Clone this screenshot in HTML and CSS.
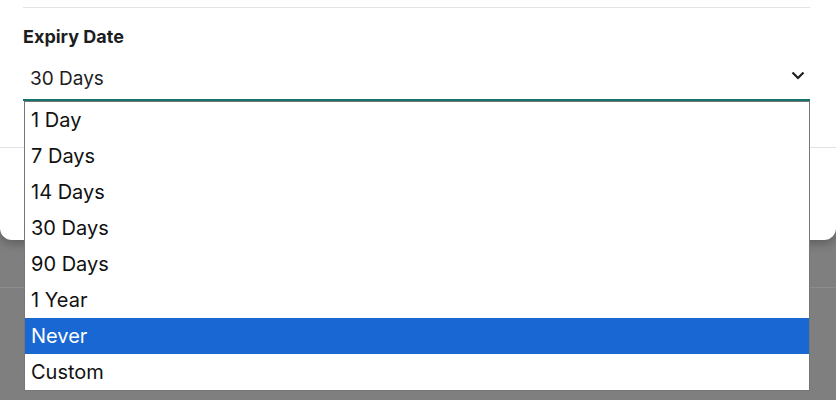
FILE: index.html
```html
<!DOCTYPE html>
<html>
<head>
<meta charset="utf-8">
<link rel="stylesheet" href="styles.css">
</head>
<body>
<div class="page">
  <div class="modal">
    <div class="modal-body">
      <div class="divider"></div>
      <div class="field">
        <div class="label">Expiry Date</div>
        <div class="select">
          <span class="value">30 Days</span>
          <svg class="chev" width="14" height="9" viewBox="0 0 14 9"><path d="M1.5 1.5 L7 7 L12.5 1.5" fill="none" stroke="#1f1f1f" stroke-width="2.2"/></svg>
        </div>
      </div>
    </div>
    <div class="modal-footer"></div>
  </div>
  <div class="backdrop-line"></div>
  <ul class="options">
    <li>1 Day</li>
    <li>7 Days</li>
    <li>14 Days</li>
    <li>30 Days</li>
    <li>90 Days</li>
    <li>1 Year</li>
    <li class="selected">Never</li>
    <li>Custom</li>
  </ul>
</div>
</body>
</html>
```
FILE: styles.css
```css
html, body {
  margin: 0;
  padding: 0;
}
body {
  width: 836px;
  height: 400px;
  overflow: hidden;
  background: #7f7f7f;
  font-family: Inter, "Noto Sans", sans-serif;
  color: #1c1d1f;
}
.page {
  position: relative;
  width: 836px;
  height: 400px;
}
.modal {
  background: #fff;
  height: 240px;
  border-radius: 0 0 12px 12px;
  box-shadow: 0 4px 10px rgba(0,0,0,0.25);
  display: flex;
  flex-direction: column;
}
.modal-body {
  padding: 7px 26px 0 23px;
  height: 140px;
  border-bottom: 1px solid #e3e3e3;
}
.divider {
  height: 1px;
  background: #e3e3e3;
}
.field {
  padding-top: 18px;
}
.label {
  font-size: 18px;
  font-weight: 650;
  line-height: 22px;
  color: #1c1d1f;
}
.select {
  border-bottom: 2px solid #12736c;
  display: flex;
  align-items: flex-start;
  justify-content: space-between;
  padding: 19px 5px 0 7px;
  box-sizing: border-box;
  height: 53px;
}
.value {
  font-size: 19px;
  line-height: 24px;
}
.chev {
  margin-top: 4px;
}
.backdrop-line {
  margin-top: 47px;
  height: 1px;
  background: #8c8c8c;
}
.options {
  position: absolute;
  left: 24px;
  top: 101px;
  width: 784px;
  margin: 0;
  padding: 0;
  list-style: none;
  background: #fff;
  border: 1px solid #767676;
}
.options li {
  height: 36px;
  line-height: 36px;
  padding-left: 6px;
  font-size: 20px;
  color: #111;
}
.options li.selected {
  background: #1967d2;
  color: #fff;
}
```
